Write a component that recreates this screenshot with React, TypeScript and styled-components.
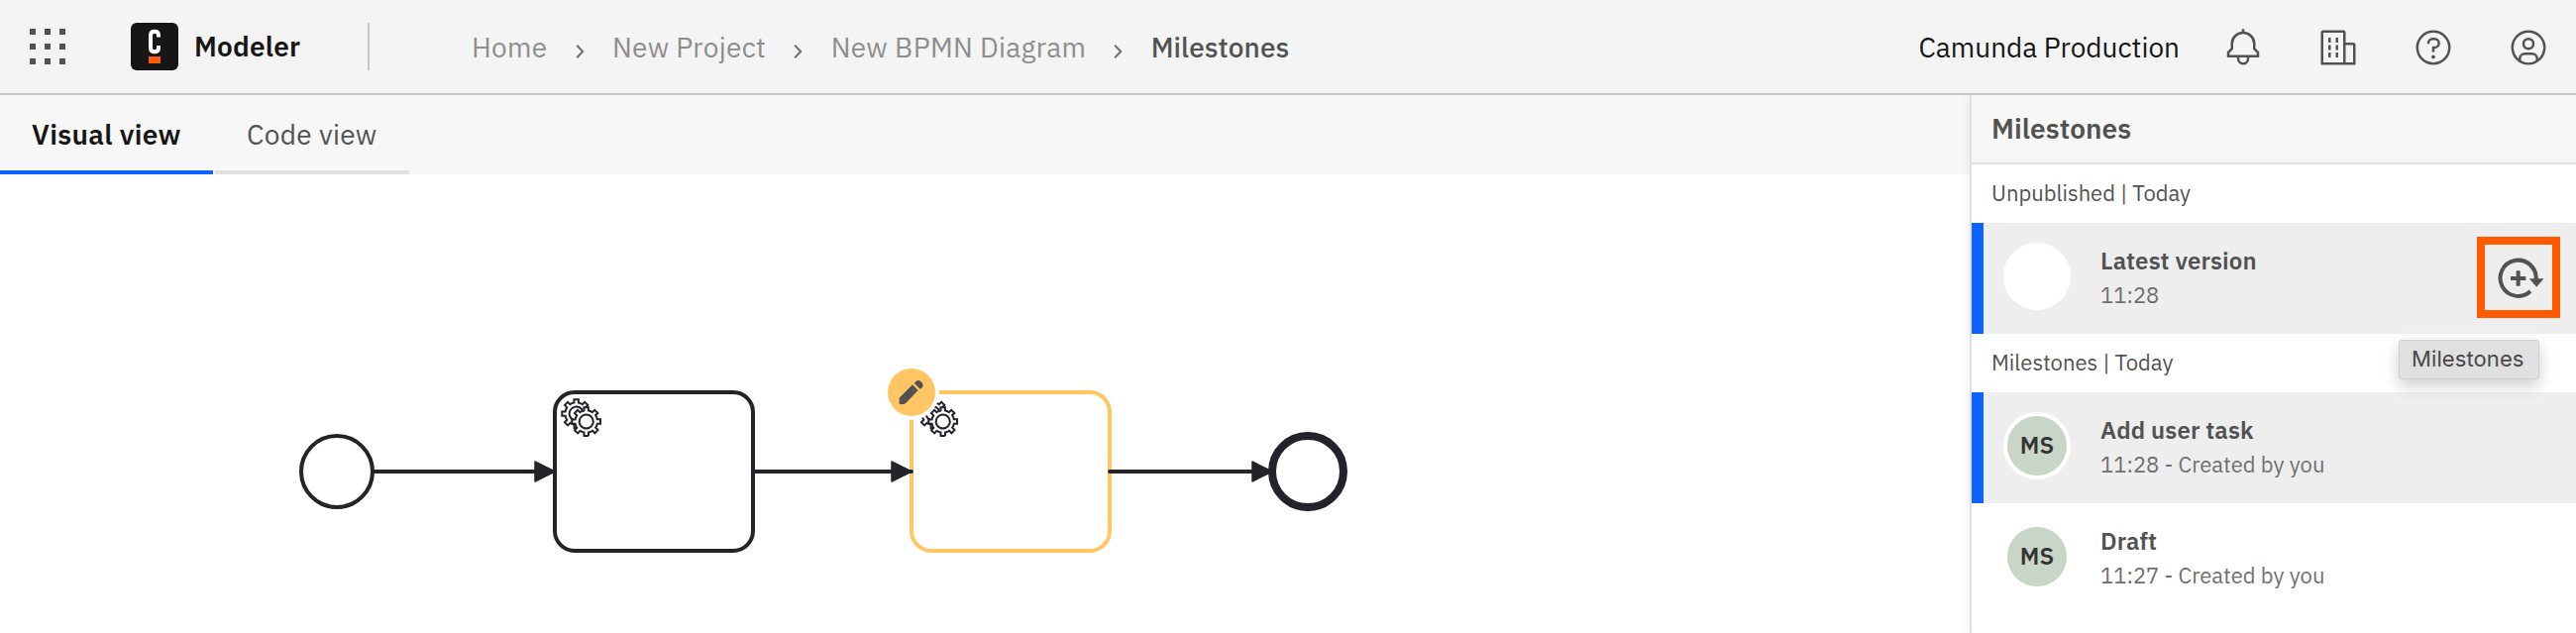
import React from 'react';
import styled, { createGlobalStyle } from 'styled-components';

const ink = '#22242a';
const amber = '#ffc663';

const GlobalStyle = createGlobalStyle`
  * { box-sizing: border-box; }
  html, body { margin: 0; background: #fff; }
  body { overflow: hidden; }
  #root { font-family: 'IBM Plex Sans', Roboto, 'Liberation Sans', sans-serif; color: #161616; }
`;

const Page = styled.div`
  display: flex;
  flex-direction: column;
  width: 2600px;
  height: 639px;
`;

const Header = styled.header`
  display: flex;
  align-items: center;
  height: 96px;
  flex: none;
  background: #f4f4f4;
  border-bottom: 2px solid #c6c6c6;
  font-size: 28px;
  line-height: 36px;
`;

const AppSwitcher = styled.button`
  display: grid;
  grid-template-columns: repeat(3, 6px);
  gap: 9px;
  justify-content: center;
  align-content: center;
  width: 96px;
  height: 94px;
  padding: 0;
  border: 0;
  background: none;
`;

const Dot = styled.i`
  width: 6px;
  height: 6px;
  background: #525252;
`;

const Logo = styled.svg`
  width: 48px;
  height: 48px;
  margin-left: 36px;
`;

const ProductName = styled.span`
  width: 175px;
  margin-left: 16px;
  font-weight: 600;
  letter-spacing: 0.2px;
`;

const Divider = styled.span`
  width: 2px;
  height: 48px;
  background: #c6c6c6;
`;

const Breadcrumb = styled.nav`
  display: flex;
  align-items: center;
  margin-left: 103px;
  padding-top: 2px;
`;

const Crumb = styled.a<{ $current?: boolean }>`
  color: ${p => (p.$current ? '#525252' : '#8d8d8d')};
  font-weight: ${p => (p.$current ? 500 : 400)};
  letter-spacing: ${p => (p.$current ? 0.1 : 0.3)}px;
`;

const Chevron = styled.svg`
  width: 9px;
  height: 14px;
  margin: 8px 28.5px 0 28px;
`;

const Organization = styled.span`
  margin-left: auto;
  padding: 2px 16px 0 0;
`;

const HeaderAction = styled.button`
  display: flex;
  align-items: center;
  justify-content: center;
  width: 96px;
  height: 94px;
  padding: 2px 0 0;
  border: 0;
  background: none;

  svg { width: 40px; height: 40px; fill: #525252; }
`;

const Body = styled.div`
  display: flex;
  flex: 1;
  min-height: 0;
`;

const Main = styled.main`
  display: flex;
  flex-direction: column;
  flex: 1;
`;

const Tabs = styled.div`
  display: flex;
  gap: 2px;
  height: 80px;
  background: #f7f7f7;
`;

const Tab = styled.button<{ $active?: boolean }>`
  width: ${p => (p.$active ? 215 : 196)}px;
  padding: 4px 0 0 32px;
  border: 0;
  border-bottom: 4px solid ${p => (p.$active ? '#0f62fe' : '#e0e0e0')};
  background: none;
  color: ${p => (p.$active ? '#161616' : '#525252')};
  font: ${p => (p.$active ? 600 : 400)} 28px/36px 'IBM Plex Sans', Roboto, sans-serif;
  letter-spacing: 0.32px;
  text-align: left;
`;

const Canvas = styled.svg`
  display: block;
  width: 1988px;
  height: 463px;
`;

const Panel = styled.aside`
  width: 612px;
  border-left: 2px solid #e0e0e0;
  background: #fff;
  box-shadow: 0 0 12px rgba(0, 0, 0, 0.07);
  clip-path: inset(0 0 0 -16px);
`;

const PanelTitle = styled.h2`
  display: flex;
  align-items: center;
  height: 70px;
  margin: 0;
  padding: 0 0 1px 20px;
  border-bottom: 2px solid #e0e0e0;
  background: #f7f7f7;
  color: #525252;
  font-size: 28px;
  font-weight: 600;
  letter-spacing: 0.1px;
`;

const SectionLabel = styled.div`
  display: flex;
  align-items: center;
  height: 59px;
  padding: 0 0 2px 20px;
  color: #525252;
  font-size: 22px;
`;

const Version = styled.div<{ $selected?: boolean }>`
  position: relative;
  display: flex;
  align-items: flex-start;
  height: 112px;
  padding: 0 16px 0 20px;
  border-left: 12px solid ${p => (p.$selected ? '#0f62fe' : 'transparent')};
  background: ${p => (p.$selected ? '#eee' : '#fff')};
  background-clip: padding-box;
`;

const Avatar = styled.div<{ $empty?: boolean }>`
  display: flex;
  align-items: center;
  justify-content: center;
  width: 68px;
  height: 68px;
  margin-top: 20px;
  padding-bottom: 2px;
  border: 4px solid #fff;
  border-radius: 50%;
  background: ${p => (p.$empty ? '#fff' : '#c8d6c8')};
  color: #333;
  font-size: 24px;
  font-weight: 600;
`;

const VersionText = styled.div`
  margin: 22px 0 0 30px;
  line-height: 32px;
`;

const VersionName = styled.div`
  color: #525252;
  font-size: 24px;
  font-weight: 600;
  letter-spacing: 0.12px;
`;

const VersionMeta = styled.div`
  margin-top: 3px;
  color: #6f6f6f;
  font-size: 22px;
  letter-spacing: 0.02px;
`;

const CreateButton = styled.button`
  width: 84px;
  height: 82px;
  margin: 14px 0 0 auto;
  padding: 0;
  border: 8px solid #ff5a00;
  background: none;

  svg { display: block; width: 68px; height: 66px; }
`;

const Tooltip = styled.div`
  position: absolute;
  top: 118px;
  right: 37px;
  z-index: 1;
  width: 142px;
  height: 40px;
  padding-left: 12px;
  border: 1px solid #cfcfcf;
  border-radius: 3px;
  background: #e0e0e0;
  box-shadow: 0 6px 16px rgba(0, 0, 0, 0.2);
  color: #484848;
  font: 22px/36px Inter, 'Liberation Sans', sans-serif;
  letter-spacing: 0.1px;
`;

const gear =
  'v -1.71335 c 0.352326,-0.0705 0.703932,-0.17838 1.047628,-0.32133 0.344416,-0.14465 0.665822,-0.32133 0.966377,-0.52145 l 1.19431,1.18005 1.567487,-1.57688 -1.195028,-1.18014 c 0.403376,-0.61394 0.683079,-1.29908 0.825447,-2.01824 l 1.622133,-0.01 v -2.2196 l -1.636514,0.01 c -0.07333,-0.35153 -0.178319,-0.70024 -0.323564,-1.04372 -0.145244,-0.34406 -0.321407,-0.6644 -0.522735,-0.96217 l 1.131035,-1.13631 -1.583305,-1.56293 -1.129598,1.13589 c -0.614052,-0.40108 -1.302883,-0.68093 -2.022633,-0.82247 l 0.0093,-1.61852 h -2.241173 l 0.0042,1.63124 c -0.353763,0.0736 -0.705369,0.17977 -1.049785,0.32371 -0.344415,0.14437 -0.665102,0.32092 -0.9635006,0.52006 l -1.1698628,-1.15823 -1.5667691,1.5792 1.1684265,1.15669 c -0.4026573,0.61283 -0.68308,1.29797 -0.8247287,2.01713 l -1.6588041,0.003 v 2.22174 l 1.6724648,-0.006 c 0.073327,0.35077 0.1797598,0.70243 0.3242851,1.04472 0.1452428,0.34448 0.3214064,0.6644 0.5227339,0.96066 l -1.1993431,1.19723 1.5840256,1.56011 1.1964668,-1.19348 c 0.6140517,0.40346 1.3028827,0.68232 2.0233517,0.82331 l 7.19e-4,1.69892 h 2.226848 z m 0.221462,-3.9957 c -1.788948,0.7502 -3.8576,-0.0928 -4.6097055,-1.87438 -0.7521065,-1.78321 0.090598,-3.84627 1.8802645,-4.59604 1.78823,-0.74936 3.856881,0.0929 4.608987,1.87437 0.752106,1.78165 -0.0906,3.84612 -1.879546,4.59605 z';

const ServiceTask = ({ x, color }: { x: number; color: string }) => (
  <g transform={`translate(${x} 396) scale(2)`}>
    <rect width="100" height="80" rx="10" fill="#fff" stroke={color} strokeWidth="2" />
    <g fill="#fff" stroke={ink} strokeWidth="1">
      <path d={`m 12,18 ${gear}`} />
      <circle cx="15.9" cy="15" r="4" stroke="none" />
      <path d={`m 17,22 ${gear}`} />
    </g>
  </g>
);

const Flow = ({ from, to }: { from: number; to: number }) => (
  <g stroke={ink} strokeLinecap="round" fill={ink}>
    <path d={`M${from} 476H${to}`} strokeWidth="4" />
    <path d={`M${to - 20} 466L${to} 476L${to - 20} 486Z`} strokeWidth="1.5" strokeLinejoin="round" />
  </g>
);

const Diagram = () => (
  <Canvas viewBox="0 176 1988 463">
    <ServiceTask x={560} color={ink} />
    <ServiceTask x={920} color={amber} />
    <circle cx="340" cy="476" r="36" fill="#fff" stroke={ink} strokeWidth="4" />
    <circle cx="1320" cy="476" r="36" fill="#fff" stroke={ink} strokeWidth="8" />
    <Flow from={378} to={560} />
    <Flow from={760} to={920} />
    <Flow from={1120} to={1284} />
    <circle cx="920" cy="396" r="28" fill="#fff" />
    <circle cx="920" cy="396" r="24" fill={amber} />
    <g transform="translate(885 360) scale(.33333)" fill="#525252">
      <path d="M108 85L69 124Q67 133 68 142Q69 145 72 145Q81 145 87 142L125 102Z" />
      <path d="M113 80L119 75Q125 70 132 74L138 80Q143 88 138 94L131 98Z" />
    </g>
  </Canvas>
);

const Separator = () => (
  <Chevron viewBox="0 0 9 14" fill="none" stroke="#6f6f6f" strokeWidth="2">
    <path d="M1.2 .8L7.2 7L1.2 13.2" />
  </Chevron>
);

const BellIcon = () => (
  <svg viewBox="0 0 32 32">
    <path d="M28.7071,19.293,26,16.5859V13a10.0136,10.0136,0,0,0-9-9.9492V1H15V3.0508A10.0136,10.0136,0,0,0,6,13v3.5859L3.2929,19.293A1,1,0,0,0,3,20v3a1,1,0,0,0,1,1h7v.7768a5.152,5.152,0,0,0,4.5,5.1987A5.0057,5.0057,0,0,0,21,25V24h7a1,1,0,0,0,1-1V20A1,1,0,0,0,28.7071,19.293ZM19,25a3,3,0,0,1-6,0V24h6Zm8-3H5V20.4141L7.707,17.707A1,1,0,0,0,8,17V13a8,8,0,0,1,16,0v4a1,1,0,0,0,.293.707L27,20.4141Z" />
  </svg>
);

const BuildingIcon = () => (
  <svg viewBox="0 0 32 32">
    <path d="M8 8H10V12H8zM8 14H10V18H8zM14 8H16V12H14zM14 14H16V18H14zM8 20H10V24H8zM14 20H16V24H14z" />
    <path d="M30,14a2,2,0,0,0-2-2H22V4a2,2,0,0,0-2-2H4A2,2,0,0,0,2,4V30H30ZM4,4H20V28H4ZM22,28V14h6V28Z" />
  </svg>
);

const HelpIcon = () => (
  <svg viewBox="0 0 32 32">
    <path d="M16,2A14,14,0,1,0,30,16,14,14,0,0,0,16,2Zm0,26A12,12,0,1,1,28,16,12,12,0,0,1,16,28Z" />
    <circle cx="16" cy="23.5" r="1.5" />
    <path d="M17,8H15.5A4.49,4.49,0,0,0,11,12.49V13h2v-.5A2.5,2.5,0,0,1,15.5,10H17a2.5,2.5,0,0,1,0,5H15v4.5h2V17a4.5,4.5,0,0,0,0-9Z" />
  </svg>
);

const UserIcon = () => (
  <svg viewBox="0 0 32 32">
    <path d="M16,8a5,5,0,1,0,5,5A5,5,0,0,0,16,8Zm0,8a3,3,0,1,1,3-3A3.0034,3.0034,0,0,1,16,16Z" />
    <path d="M16,2A14,14,0,1,0,30,16,14.0158,14.0158,0,0,0,16,2ZM10,26.3765V25a3.0033,3.0033,0,0,1,3-3h6a3.0033,3.0033,0,0,1,3,3v1.3765a11.8989,11.8989,0,0,1-12,0Zm13.9925-1.4507A5.0016,5.0016,0,0,0,19,20H13a5.0016,5.0016,0,0,0-4.9925,4.9258,12,12,0,1,1,15.985,0Z" />
  </svg>
);

const NewVersionIcon = () => (
  <svg viewBox="2508 247 68 66" fill="none" stroke="#525252" strokeWidth="4">
    <path d="M2559.7 282A18.1 18.1 0 1 0 2554 294" />
    <path d="M2534 281H2549.3M2541.65 273.3V288.7" />
    <path d="M2552.8 281.3H2567.5L2560.2 289.8Z" fill="#525252" stroke="none" />
  </svg>
);

export default function App() {
  return (
    <>
      <GlobalStyle />
      <Page>
        <Header>
          <AppSwitcher aria-label="Apps">
            {Array.from({ length: 9 }, (_, i) => <Dot key={i} />)}
          </AppSwitcher>
          <Logo viewBox="0 0 48 48">
            <rect width="48" height="48" rx="6" fill="#161616" />
            <path d="M28 14.5V12.5Q28 8.7 24 8.7T20 12.5V25.5Q20 29.3 24 29.3T28 25.5V23" fill="none" stroke="#fff" strokeWidth="4" />
            <rect x="18" y="34" width="12" height="7" fill="#fc5d0d" />
          </Logo>
          <ProductName>Modeler</ProductName>
          <Divider />
          <Breadcrumb>
            <Crumb>Home</Crumb>
            <Separator />
            <Crumb>New Project</Crumb>
            <Separator />
            <Crumb>New BPMN Diagram</Crumb>
            <Separator />
            <Crumb $current>Milestones</Crumb>
          </Breadcrumb>
          <Organization>Camunda Production</Organization>
          <HeaderAction aria-label="Notifications"><BellIcon /></HeaderAction>
          <HeaderAction aria-label="Organization"><BuildingIcon /></HeaderAction>
          <HeaderAction aria-label="Help"><HelpIcon /></HeaderAction>
          <HeaderAction aria-label="Account"><UserIcon /></HeaderAction>
        </Header>
        <Body>
          <Main>
            <Tabs>
              <Tab $active>Visual view</Tab>
              <Tab>Code view</Tab>
            </Tabs>
            <Diagram />
          </Main>
          <Panel>
            <PanelTitle>Milestones</PanelTitle>
            <SectionLabel>Unpublished | Today</SectionLabel>
            <Version $selected>
              <Avatar $empty />
              <VersionText>
                <VersionName>Latest version</VersionName>
                <VersionMeta>11:28</VersionMeta>
              </VersionText>
              <CreateButton aria-label="Create milestone"><NewVersionIcon /></CreateButton>
              <Tooltip>Milestones</Tooltip>
            </Version>
            <SectionLabel>Milestones | Today</SectionLabel>
            <Version $selected>
              <Avatar>MS</Avatar>
              <VersionText>
                <VersionName>Add user task</VersionName>
                <VersionMeta>11:28 - Created by you</VersionMeta>
              </VersionText>
            </Version>
            <Version>
              <Avatar>MS</Avatar>
              <VersionText>
                <VersionName>Draft</VersionName>
                <VersionMeta>11:27 - Created by you</VersionMeta>
              </VersionText>
            </Version>
          </Panel>
        </Body>
      </Page>
    </>
  );
}
